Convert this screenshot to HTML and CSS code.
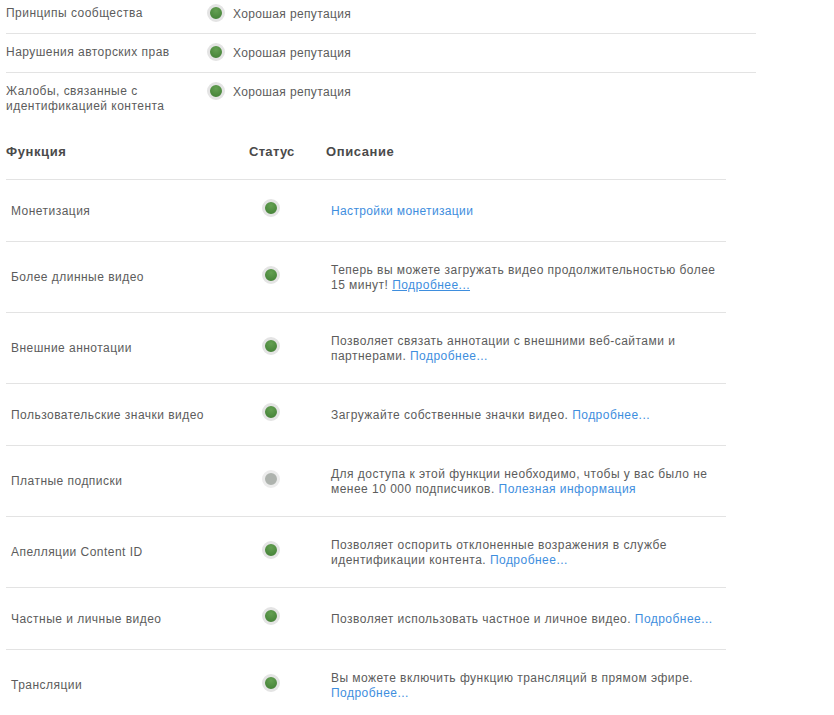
FILE: index.html
```
<!DOCTYPE html>
<html lang="ru">
<head>
<meta charset="utf-8">
<title>Статус и функции</title>
<link rel="stylesheet" href="styles.css">
</head>
<body>
<section class="rep">
  <div class="rep-row"><div class="rep-name">Принципы сообщества</div><span class="dot"></span><div class="rep-val">Хорошая репутация</div></div>
  <div class="rep-row"><div class="rep-name">Нарушения авторских прав</div><span class="dot"></span><div class="rep-val">Хорошая репутация</div></div>
  <div class="rep-row"><div class="rep-name">Жалобы, связанные с идентификацией контента</div><span class="dot"></span><div class="rep-val">Хорошая репутация</div></div>
</section>
<section class="features">
  <div class="head"><div class="h-name">Функция</div><div class="h-status">Статус</div><div class="h-desc">Описание</div></div>
  <div class="row single"><div class="name">Монетизация</div><div class="status"><span class="dot"></span></div><div class="desc"><a class="plain" href="#">Настройки монетизации</a></div></div>
  <div class="row"><div class="name">Более длинные видео</div><div class="status"><span class="dot"></span></div><div class="desc">Теперь вы можете загружать видео продолжительностью более 15 минут! <a class="ul" href="#">Подробнее...</a></div></div>
  <div class="row"><div class="name">Внешние аннотации</div><div class="status"><span class="dot"></span></div><div class="desc">Позволяет связать аннотации с внешними веб-сайтами и партнерами. <a href="#">Подробнее...</a></div></div>
  <div class="row single"><div class="name">Пользовательские значки видео</div><div class="status"><span class="dot"></span></div><div class="desc">Загружайте собственные значки видео. <a href="#">Подробнее...</a></div></div>
  <div class="row"><div class="name">Платные подписки</div><div class="status"><span class="dot off"></span></div><div class="desc">Для доступа к этой функции необходимо, чтобы у вас было не менее 10 000 подписчиков. <a href="#">Полезная информация</a></div></div>
  <div class="row"><div class="name">Апелляции Content ID</div><div class="status"><span class="dot"></span></div><div class="desc">Позволяет оспорить отклоненные возражения в службе идентификации контента. <a href="#">Подробнее...</a></div></div>
  <div class="row single"><div class="name">Частные и личные видео</div><div class="status"><span class="dot"></span></div><div class="desc">Позволяет использовать частное и личное видео. <a href="#">Подробнее...</a></div></div>
  <div class="row"><div class="name">Трансляции</div><div class="status"><span class="dot"></span></div><div class="desc">Вы можете включить функцию трансляций в прямом эфире. <a href="#">Подробнее...</a></div></div>
</section>
</body>
</html>
```
FILE: styles.css
```
html, body { margin: 0; padding: 0; height: 715px; overflow: hidden; background: #fff; }
body { font: 12px/15px "Liberation Sans", Arial, sans-serif; color: #5c5c5c; letter-spacing: .47px; }
.dot { display: block; box-sizing: border-box; width: 18px; height: 18px; border-radius: 50%; border: 3px solid #e4e4e4; background: radial-gradient(circle at 50% 30%, #64a052, #3f7d33); flex: none; }
.dot.off { background: #aeb3ae; border-color: #ececec; }
.rep { width: 750px; margin-left: 6px; }
.rep-row { display: flex; box-sizing: border-box; height: 39px; padding-top: 9px; border-bottom: 1px solid #e3e3e3; }
.rep-row:first-child { height: 34px; padding-top: 4px; }
.rep-row:last-child { height: 41px; border: 0; }
.rep-name { width: 201px; flex: none; padding: 2px 30px 0 0; box-sizing: border-box; }
.rep-val { margin: 3px 0 0 8px; letter-spacing: .36px; }
.features { width: 720px; margin: 30px 0 0 6px; }
.head { display: flex; height: 35px; font-weight: bold; font-size: 13px; letter-spacing: .6px; border-bottom: 1px solid #e3e3e3; color: #4a4a4a; }
.h-name { width: 243px; }
.h-status { width: 77px; letter-spacing: .3px; }
.row { display: flex; align-items: center; min-height: 61px; border-bottom: 1px solid #e3e3e3; }
.name { width: 230px; box-sizing: border-box; padding-left: 5px; flex: none; }
.single .name { padding-top: 2px; }
.status { width: 70px; flex: none; display: flex; justify-content: center; }
.status .dot { margin-bottom: 5px; }
.desc { flex: 1; padding: 21px 5px 19px 25px; }
a { color: #3e8ede; text-decoration: none; }
a.ul { text-decoration: underline; }
a.plain { letter-spacing: .36px; }
```
